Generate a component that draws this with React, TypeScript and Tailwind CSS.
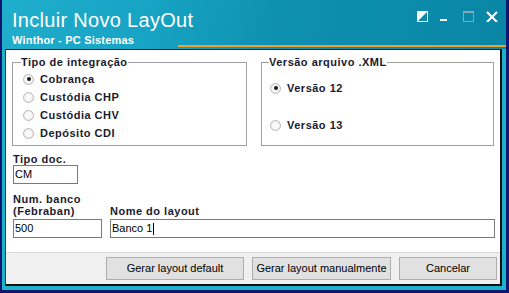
import React from "react";

const font = "font-['Liberation_Sans',Arial,sans-serif]";

function Radio({ checked, label }: { checked?: boolean; label: string }) {
  return (
    <div className="flex h-[18px] items-center gap-[6px]">
      <span className="flex h-[11px] w-[11px] items-center justify-center rounded-full border border-[#b9b9b9] bg-[radial-gradient(circle,#ffffff_0%,#f2f2f2_60%,#dcdcdc_100%)]">
        {checked && <span className="h-[4px] w-[4px] rounded-full bg-[#1a1a1a]" />}
      </span>
      <span className="text-[11px] font-bold leading-[13px] tracking-[0.5px] text-[#1a1a2e]">{label}</span>
    </div>
  );
}

function Field({ children, w, cursor }: { children: React.ReactNode; w: string; cursor?: boolean }) {
  return (
    <div className={`flex h-[19px] items-center border border-[#7a7a7a] bg-white pl-[1px] text-[11px] leading-[13px] text-black ${w}`}>
      <span>{children}</span>
      {cursor && <span className="ml-[1px] h-[12px] w-[1px] bg-black" />}
    </div>
  );
}

function Btn({ label, w }: { label: string; w: string }) {
  return (
    <div className={`flex h-[23px] items-center justify-center border border-[#adadad] bg-[#e1e1e1] text-[11px] text-black ${w}`}>
      {label}
    </div>
  );
}

export default function App() {
  return (
    <div className={`${font} flex h-[293px] w-[509px] flex-col border-b-[3px] border-l-2 border-r-[3px] border-[#0b1670] bg-[#1cb2ca]`}>
      {/* Title bar */}
      <div className="flex h-[49px] shrink-0 flex-col bg-[linear-gradient(100deg,#20aecd_0%,#17a3c3_30%,#0e90b0_55%,#0a86a5_100%)]">
        <div className="flex h-[45px] shrink-0 justify-between">
          <div className="pl-[10px] pt-[8px] text-white">
            <div className="text-[20px] leading-[24px] tracking-[0.3px]">Incluir Novo LayOut</div>
            <div className="mt-[2px] text-[11px] font-bold leading-[12px] tracking-[0.2px]">Winthor - PC Sistemas</div>
          </div>
          <div className="pr-[8px] pt-[11px]">
            <svg width="81" height="11" viewBox="0 0 81 11">
              <rect x="0.5" y="0.5" width="10" height="10" fill="none" stroke="#ffffff" strokeWidth="1" />
              <polygon points="0,0 11,0 0,11" fill="#ffffff" />
              <rect x="23" y="8" width="7" height="2" fill="#ffffff" />
              <rect x="46.5" y="0.5" width="10" height="10" fill="none" stroke="#8aa6b0" strokeWidth="1" />
              <rect x="46" y="0" width="11" height="2" fill="#8aa6b0" />
              <line x1="70" y1="1" x2="80" y2="11" stroke="#ffffff" strokeWidth="2" />
              <line x1="80" y1="1" x2="70" y2="11" stroke="#ffffff" strokeWidth="2" />
            </svg>
          </div>
        </div>
        <div className="ml-[176px] h-[2px] shrink-0 bg-[#f0a02c]" />
      </div>

      {/* Content */}
      <div className="ml-[3px] mr-[4px] flex h-[237px] shrink-0 flex-col border-b-2 border-l border-r-2 border-t border-b-[#101010] border-l-[#303030] border-r-[#101010] border-t-[#202020] bg-white">
        <div className="flex h-[202px] shrink-0 flex-col pl-[6px]">
          <div className="mt-[6px] flex gap-[14px]">
            <fieldset className="h-[90px] w-[235px] border border-[#a0a0a0] px-[8px]">
              <legend className="text-[11px] font-bold leading-[13px] tracking-[0.5px] text-[#1a1a2e]">Tipo de integração</legend>
              <div className="pl-[2px] pt-[1px]">
                <Radio checked label="Cobrança" />
                <Radio label="Custódia CHP" />
                <Radio label="Custódia CHV" />
                <Radio label="Depósito CDI" />
              </div>
            </fieldset>
            <fieldset className="h-[90px] w-[233px] border border-[#a0a0a0] px-[7px]">
              <legend className="text-[11px] font-bold leading-[13px] tracking-[0.5px] text-[#1a1a2e]">Versão arquivo .XML</legend>
              <div className="flex flex-col gap-[19px] pl-[1px] pt-[10px]">
                <Radio checked label="Versão 12" />
                <Radio label="Versão 13" />
              </div>
            </fieldset>
          </div>

          <div className="pl-[1px]">
            <div className="mt-[7px] text-[11px] font-bold leading-[12px] tracking-[0.5px] text-[#1a1a2e]">Tipo doc.</div>
            <Field w="w-[65px]">CM</Field>

            <div className="mt-[9px] flex items-end gap-[8px]">
              <div className="flex flex-col">
                <div className="text-[11px] font-bold leading-[12px] tracking-[0.5px] text-[#1a1a2e]">
                  Num. banco
                  <br />
                  (Febraban)
                </div>
                <div className="mt-[2px]">
                  <Field w="w-[89px]">500</Field>
                </div>
              </div>
              <div className="flex flex-col">
                <div className="text-[11px] font-bold leading-[12px] tracking-[0.5px] text-[#1a1a2e]">Nome do layout</div>
                <div className="mt-[2px]">
                  <Field w="w-[385px]" cursor>
                    Banco 1
                  </Field>
                </div>
              </div>
            </div>
          </div>
        </div>

        {/* Footer */}
        <div className="flex h-[32px] shrink-0 justify-end gap-[8px] border-t border-[#dadada] bg-[#f0f0f0] pr-[3px] pt-[4px]">
          <Btn label="Gerar layout default" w="w-[138px]" />
          <Btn label="Gerar layout manualmente" w="w-[139px]" />
          <Btn label="Cancelar" w="w-[98px]" />
        </div>
      </div>
    </div>
  );
}
